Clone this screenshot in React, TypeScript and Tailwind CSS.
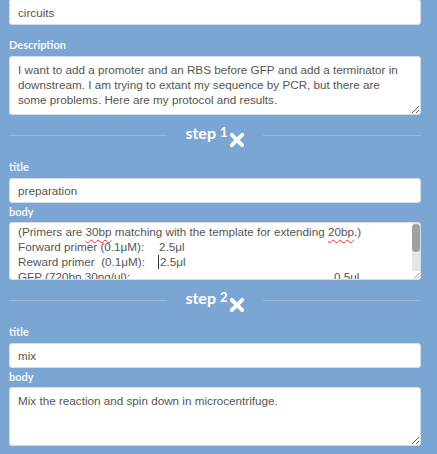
import React from 'react';

const sans = "font-['Liberation_Sans',Arial,sans-serif]";
const head = "font-['Lato','Open_Sans',sans-serif]";

const Label = ({ children, className = '' }: { children: React.ReactNode; className?: string }) => (
  <div className={`${head} text-[11px] font-bold leading-4 text-[#f4f7fb] ${className}`}>{children}</div>
);

const TextInput = ({ value, className = '' }: { value: string; className?: string }) => (
  <input
    readOnly
    value={value}
    className={`block h-[25px] w-full rounded-[3px] border border-[#d5dde8] bg-white px-[8px] ${sans} text-[11.7px] text-[#555] outline-none ${className}`}
  />
);

const TextArea = ({ value, height }: { value: string; height: string }) => (
  <textarea
    readOnly
    value={value}
    className={`block w-full ${height} rounded-[3px] border border-[#d5dde8] bg-white px-[8px] pt-[5px] ${sans} text-[11.7px] leading-[15px] text-[#555] outline-none`}
  />
);

const TimesIcon = () => (
  <svg width="16" height="16" viewBox="0 0 16 16" className="ml-[1px] mt-[9px]">
    <path d="M2.8 2.8 L13.2 13.2 M13.2 2.8 L2.8 13.2" stroke="white" strokeWidth="3.8" strokeLinecap="round" />
  </svg>
);

const StepHeader = ({ n }: { n: number }) => (
  <div className="mb-[3px] flex h-[41px] items-center gap-[18px]">
    <div className="h-px flex-1 bg-[#9bb7d8]" />
    <div className={`flex items-start ${head} font-bold text-white`}>
      <span className="text-[16px] leading-[20px]">step</span>
      <span className="ml-[4px] text-[13px] leading-[18px]">{n}</span>
      <TimesIcon />
    </div>
    <div className="h-px flex-1 bg-[#9bb7d8]" />
  </div>
);

const Squiggle = ({ children }: { children: React.ReactNode }) => (
  <span className="underline decoration-[#e0322f] decoration-wavy decoration-1 underline-offset-[3px]">{children}</span>
);

const ProtocolBody = () => (
  <div className="flex h-[58px] overflow-hidden rounded-[3px] border border-[#d5dde8] bg-white">
    <div className={`flex-1 overflow-hidden whitespace-pre pl-[8px] pt-[1px] ${sans} text-[11.7px] leading-[15px] text-[#555]`}>
      <div>
        (Primers are <Squiggle>30bp</Squiggle> matching with the template for extending <Squiggle>20bp</Squiggle>.)
      </div>
      <div>
        <span className="inline-block w-[141px]">Forward primer (0.1μM):</span>2.5μl
      </div>
      <div className="flex items-center">
        <span className="inline-block w-[140px]">Reward primer  (0.1μM):</span>
        <span className="mr-[1px] inline-block h-[14px] w-px bg-[#333]" />
        2.5μl
      </div>
      <div>
        <span className="inline-block w-[316px]">GFP (720bp,30ng/ul):</span>0.5ul
      </div>
    </div>
    <div className="flex w-[8px] flex-col">
      <div className="flex-1 bg-[#e6e6e6] pt-[1px]">
        <div className="h-[28px] rounded-[4px] bg-[#a1a1a1]" />
      </div>
      <div className="flex h-[8px] items-end justify-end bg-white">
        <svg width="7" height="7" viewBox="0 0 7 7">
          <path d="M1 6.5 L6.5 1 M4 6.5 L6.5 4" stroke="#999" strokeWidth="1" />
        </svg>
      </div>
    </div>
  </div>
);

const description =
  'I want to add a promoter and an RBS before GFP and add a terminator in\n' +
  'downstream. I am trying to extant my sequence by PCR, but there are\n' +
  'some problems. Here are my protocol and results.';

export default function App() {
  return (
    <div className="min-h-screen bg-[#7ba6d4] pb-[8px] pl-[9px] pr-[16px]">
      <TextInput value="circuits" className="-mt-[1px] h-[26px]" />

      <Label className="mb-[3px] mt-[12px]">Description</Label>
      <TextArea height="h-[59px]" value={description} />

      <StepHeader n={1} />
      <Label className="mb-[3px]">title</Label>
      <TextInput value="preparation" />
      <Label className="mb-[2px] mt-[1px]">body</Label>
      <ProtocolBody />

      <StepHeader n={2} />
      <Label className="mb-[3px]">title</Label>
      <TextInput value="mix" />
      <Label className="mb-[2px] mt-[1px]">body</Label>
      <TextArea height="h-[59px]" value="Mix the reaction and spin down in microcentrifuge." />
    </div>
  );
}
